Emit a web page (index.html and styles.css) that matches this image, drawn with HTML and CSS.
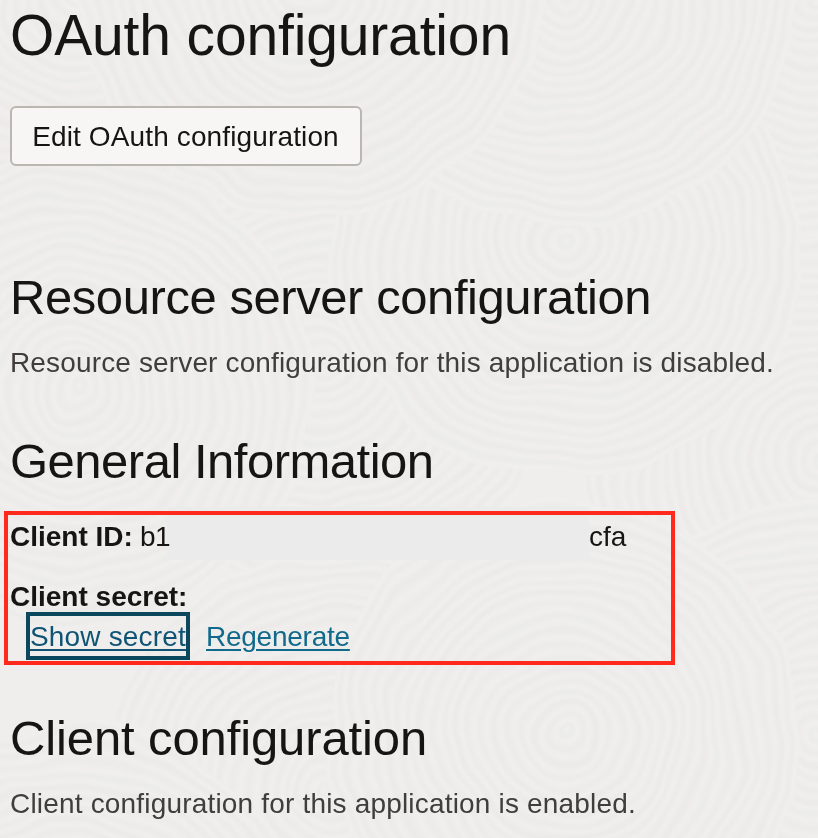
FILE: index.html
```
<!DOCTYPE html>
<html lang="en">
<head>
<meta charset="utf-8">
<title>OAuth configuration</title>
<link rel="stylesheet" href="styles.css">
</head>
<body>
<main class="page">
  <svg class="texture" viewBox="0 0 818 838" aria-hidden="true">
    <defs>
      <radialGradient id="rings" gradientUnits="userSpaceOnUse" cx="0" cy="0" r="37" spreadMethod="repeat">
        <stop offset="0" stop-color="#f0efed"/>
        <stop offset=".16" stop-color="#ebebe9"/>
        <stop offset=".3" stop-color="#f0efed"/>
        <stop offset=".5" stop-color="#ecebea"/>
        <stop offset=".66" stop-color="#f0efed"/>
        <stop offset=".85" stop-color="#ebeae9"/>
        <stop offset="1" stop-color="#f0efed"/>
      </radialGradient>
      <circle id="disc" r="236" fill="url(#rings)"/>
      <filter id="wobble" x="0" y="0" width="100%" height="100%">
        <feTurbulence type="fractalNoise" baseFrequency=".012" numOctaves="2" seed="4"/>
        <feDisplacementMap in="SourceGraphic" scale="26" xChannelSelector="R" yChannelSelector="G"/>
      </filter>
    </defs>
    <rect width="818" height="838" fill="#efeeec"/>
    <g filter="url(#wobble)">
      <use href="#disc" x="320" y="360"/>
      <use href="#disc" x="818" y="460"/>
      <use href="#disc" x="818" y="0"/>
      <use href="#disc" x="75" y="0"/>
      <use href="#disc" x="75" y="390"/>
      <use href="#disc" x="565" y="245"/>
      <use href="#disc" x="565" y="-8"/>
      <use href="#disc" x="310" y="-20"/>
      <use href="#disc" x="330" y="790"/>
      <use href="#disc" x="818" y="735"/>
      <use href="#disc" x="565" y="735"/>
      <use href="#disc" x="75" y="960"/>
    </g>
  </svg>

  <h1 class="title">OAuth configuration</h1>
  <button class="button" type="button">Edit OAuth configuration</button>

  <section class="section section-resource">
    <h2 class="heading heading-resource">Resource server configuration</h2>
    <p class="text text-resource">Resource server configuration for this application is disabled.</p>
  </section>

  <section class="section section-general">
    <h2 class="heading heading-general">General Information</h2>
    <div class="credentials">
      <div class="row">
        <strong class="label label-id">Client ID:</strong>
        <span class="id-start">b1</span>
        <span class="redacted"></span>
        <span class="id-end">cfa</span>
      </div>
      <div class="row row-secret"><strong class="label label-secret">Client secret:</strong></div>
      <div class="row row-links">
        <a class="link link-focused" href="#"><span class="link-text">Show secret</span></a>
        <a class="link link-regenerate" href="#"><span class="link-text">Regenerate</span></a>
      </div>
    </div>
  </section>

  <section class="section section-client">
    <h2 class="heading heading-client">Client configuration</h2>
    <p class="text text-client">Client configuration for this application is enabled.</p>
  </section>
</main>
</body>
</html>
```
FILE: styles.css
```
* { box-sizing: border-box; }

body {
  margin: 0;
  background: #efeeec;
  color: #161513;
  font: 28px/40px "Liberation Sans", Arial, sans-serif;
}

.page {
  position: relative;
  isolation: isolate;
  height: 838px;
  padding: 3px 10px 0;
  overflow: hidden;
  white-space: nowrap;
}

.texture {
  position: absolute;
  inset: 0;
  z-index: -2;
  width: 818px;
  height: 838px;
}

.title {
  margin: 0;
  font-size: 57px;
  font-weight: 400;
  line-height: 64px;
  letter-spacing: -0.15px;
}

.button {
  display: flex;
  align-items: center;
  justify-content: center;
  width: 352px;
  height: 60px;
  margin: 39px 0 0;
  padding: 2px 1px 0 0;
  border: 2px solid #bab6b0;
  border-radius: 6px;
  background: #f7f6f4;
  color: #161513;
  font: inherit;
  letter-spacing: 0.13px;
}

.section-resource { margin-top: 103px; }
.section-general { margin-top: 50px; }
.section-client { margin-top: 45px; }

.heading {
  margin: 0;
  font-size: 49px;
  font-weight: 400;
  line-height: 56px;
}

.heading-resource { letter-spacing: -0.43px; }
.heading-general { letter-spacing: -0.5px; }
.heading-client { letter-spacing: -0.12px; }

.text {
  margin: 18px 0 0;
  color: #403e3c;
}

.text-resource { letter-spacing: 0.145px; }
.text-client { letter-spacing: 0.18px; }

.credentials {
  width: 671px;
  height: 154px;
  margin: 22px 0 0 -6px;
  padding: 2px 2px 0;
  border: 4px solid #ff2a1c;
}

.row {
  display: flex;
  height: 40px;
}

.id-start {
  width: 27px;
  margin-left: 7px;
  letter-spacing: -0.5px;
}

.label-id { width: 123px; }

.redacted {
  position: relative;
  z-index: -1;
  width: 422px;
  height: 53px;
  margin: -10px 0 0 0;
  background: #ebebeb;
}

.row-secret { margin-top: 20px; }

.row-links {
  gap: 20px;
  margin-top: -1px;
  padding-left: 20px;
}

.link {
  height: 40px;
  padding-top: 1px;
  color: #116a8b;
  text-decoration: underline;
  text-decoration-thickness: 2px;
  text-underline-offset: 3px;
  text-decoration-skip-ink: auto;
}

.link-focused {
  width: 156px;
  color: #0f5475;
  letter-spacing: 0.17px;
  outline: 4px solid #0c485d;
}

.link-regenerate { letter-spacing: -0.25px; }
```
